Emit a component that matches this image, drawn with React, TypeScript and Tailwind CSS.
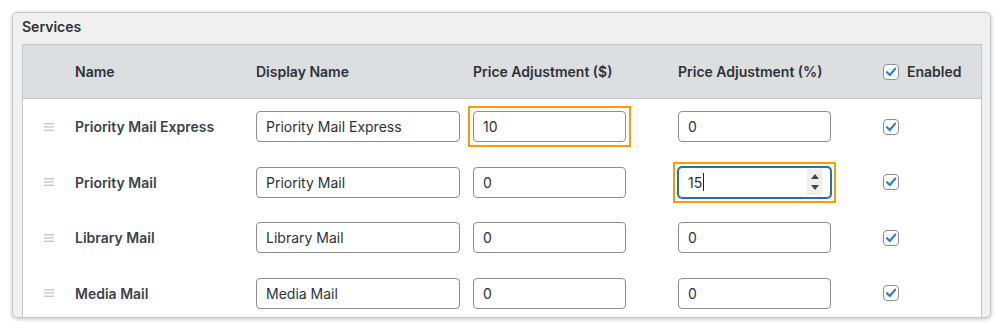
import React from 'react';

const services = [
  { name: 'Priority Mail Express', display: 'Priority Mail Express', flat: '10', pct: '0', hiFlat: true },
  { name: 'Priority Mail', display: 'Priority Mail', flat: '0', pct: '15', hiPct: true },
  { name: 'Library Mail', display: 'Library Mail', flat: '0', pct: '0' },
  { name: 'Media Mail', display: 'Media Mail', flat: '0', pct: '0' },
];

const cols = 'grid grid-cols-[52px_181px_217px_205px_205px_1fr] items-center';

function Checkbox() {
  return (
    <span className="flex h-4 w-4 items-center justify-center rounded-[4px] border border-[#8c8f94] bg-white">
      <svg width="12" height="12" viewBox="0 0 12 12">
        <path d="M2 6.2 L4.8 9 L10.2 2.6" fill="none" stroke="#2a7fd4" strokeWidth="2.2" strokeLinecap="round" strokeLinejoin="round" />
      </svg>
    </span>
  );
}

function Handle() {
  return (
    <svg width="10" height="8" viewBox="0 0 10 8" className="ml-[21px]">
      <rect x="0" y="0" width="10" height="1.4" fill="#c8c9cb" />
      <rect x="0" y="3.3" width="10" height="1.4" fill="#c8c9cb" />
      <rect x="0" y="6.6" width="10" height="1.4" fill="#c8c9cb" />
    </svg>
  );
}

function Field({ value, width, highlight, focused }: { value: string; width: string; highlight?: boolean; focused?: boolean }) {
  return (
    <div className={`relative h-[31px] ${width}`}>
      {highlight && <span className="pointer-events-none absolute -inset-[5px] border-[2.5px] border-[#ff9a00]" />}
      <div
        className={`flex h-full items-center rounded-[4px] bg-white pl-[9px] text-[14px] text-[#2c3338] ${
          focused ? 'border border-[#2271b1] shadow-[0_0_0_1px_#2271b1]' : 'border border-[#8c8f94]'
        }`}
      >
        <span>{value}</span>
        {focused && <span className="ml-[1px] h-[18px] w-px bg-[#1d2327]" />}
        {focused && (
          <span className="ml-auto mr-[8px] flex h-[26px] w-[15px] flex-col items-center justify-center gap-[6px] bg-[#efefef]">
            <span className="h-0 w-0 border-x-[4px] border-b-[5px] border-x-transparent border-b-[#444]" />
            <span className="h-0 w-0 border-x-[4px] border-t-[5px] border-x-transparent border-t-[#444]" />
          </span>
        )}
      </div>
    </div>
  );
}

export default function App() {
  return (
    <div className="h-[330px] w-[1000px] bg-white p-[12px] pr-[9px] font-['Inter','Noto_Sans',sans-serif]">
      <div className="flex h-[306px] flex-col overflow-hidden rounded-[5px] border border-[#c6c7c9] bg-[#f0f0f1] pl-[9px] pr-[8px] pt-[4px] shadow-[0_1px_4px_rgba(0,0,0,0.25)]">
        <h2 className="mb-[7px] h-[20px] text-[14px] leading-[20px] font-semibold text-[#2c3338]">Services</h2>

        <div className="flex-1 border-x border-t border-[#c3c4c7] bg-white">
          {/* header */}
          <div className={`${cols} h-[54px] border-b border-[#c3c4c7] bg-[#dcdee0] text-[14px] font-semibold text-[#2c3338]`}>
            <span />
            <span>Name</span>
            <span>Display Name</span>
            <span>Price Adjustment ($)</span>
            <span>Price Adjustment (%)</span>
            <span className="flex items-center gap-[8px]">
              <Checkbox />
              <span>Enabled</span>
            </span>
          </div>

          {services.map((s) => (
            <div key={s.name} className={`${cols} h-[55.5px]`}>
              <Handle />
              <span className="text-[14px] font-semibold text-[#3c434a]">{s.name}</span>
              <Field value={s.display} width="w-[204px]" />
              <Field value={s.flat} width="w-[153px]" highlight={s.hiFlat} />
              <Field value={s.pct} width="w-[153px]" highlight={s.hiPct} focused={s.hiPct} />
              <Checkbox />
            </div>
          ))}
        </div>
      </div>
    </div>
  );
}
